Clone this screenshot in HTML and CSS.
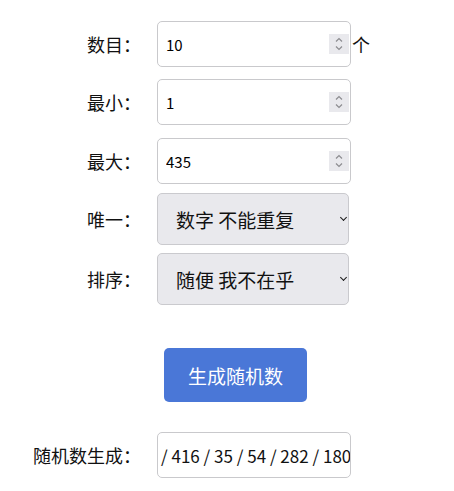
FILE: index.html
```html
<!DOCTYPE html>
<html lang="zh-CN">
<head>
<meta charset="utf-8">
<title>随机数生成</title>
<link rel="stylesheet" href="styles.css">
</head>
<body>
<main class="form">
  <div class="row row-count">
    <label class="lbl" for="count">数目：</label>
    <div class="num">
      <input id="count" class="field" type="text" value="10">
      <span class="spin" aria-hidden="true">
        <svg width="18" height="20" viewBox="0 0 18 20"><path d="M6 7.5 L9 4.5 L12 7.5" fill="none" stroke="#8c8c90" stroke-width="1.2"/><path d="M6 12.5 L9 15.5 L12 12.5" fill="none" stroke="#8c8c90" stroke-width="1.2"/></svg>
      </span>
    </div>
    <span class="unit">个</span>
  </div>
  <div class="row row-min">
    <label class="lbl" for="min">最小：</label>
    <div class="num">
      <input id="min" class="field" type="text" value="1">
      <span class="spin" aria-hidden="true">
        <svg width="18" height="20" viewBox="0 0 18 20"><path d="M6 7.5 L9 4.5 L12 7.5" fill="none" stroke="#8c8c90" stroke-width="1.2"/><path d="M6 12.5 L9 15.5 L12 12.5" fill="none" stroke="#8c8c90" stroke-width="1.2"/></svg>
      </span>
    </div>
  </div>
  <div class="row row-max">
    <label class="lbl" for="max">最大：</label>
    <div class="num">
      <input id="max" class="field" type="text" value="435">
      <span class="spin" aria-hidden="true">
        <svg width="18" height="20" viewBox="0 0 18 20"><path d="M6 7.5 L9 4.5 L12 7.5" fill="none" stroke="#8c8c90" stroke-width="1.2"/><path d="M6 12.5 L9 15.5 L12 12.5" fill="none" stroke="#8c8c90" stroke-width="1.2"/></svg>
      </span>
    </div>
  </div>
  <div class="row row-uniq">
    <label class="lbl" for="uniq">唯一：</label>
    <div class="sel">
      <select id="uniq" class="choice"><option>数字 不能重复</option><option>数字 可以重复</option></select>
    </div>
  </div>
  <div class="row row-sort">
    <label class="lbl" for="sort">排序：</label>
    <div class="sel">
      <select id="sort" class="choice"><option>随便 我不在乎</option><option>从小到大</option><option>从大到小</option></select>
    </div>
  </div>
  <div class="actions">
    <button class="gen" type="button">生成随机数</button>
  </div>
  <div class="row row-out">
    <label class="lbl">随机数生成：</label>
    <div class="result"><span class="result-text">/ 416 / 35 / 54 / 282 / 180</span></div>
  </div>
</main>
</body>
</html>
```

FILE: styles.css
```css
* { box-sizing: border-box; }

html, body {
  margin: 0;
  padding: 0;
  background: #ffffff;
}

body {
  font-family: "Noto Sans CJK SC", "Noto Sans", sans-serif;
  color: #111111;
}

.form {
  display: flex;
  flex-direction: column;
  padding-top: 21px;
}

.row {
  display: flex;
  align-items: center;
}

.row-min { margin-top: 12px; }
.row-max { margin-top: 13px; }
.row-uniq { margin-top: 9px; }
.row-sort { margin-top: 8px; }
.row-out { margin-top: 30px; }

.lbl {
  flex: none;
  width: 141px;
  text-align: right;
  font-size: 18px;
  line-height: 24px;
  margin-right: 16px;
  color: #111111;
}

.num {
  position: relative;
  width: 194px;
  height: 46px;
}

.field {
  display: block;
  width: 100%;
  height: 100%;
  border: 1px solid #c9c9cc;
  border-radius: 5px;
  background: #ffffff;
  padding: 0 30px 0 8px;
  font-family: "Noto Sans CJK SC", "Noto Sans", sans-serif;
  font-size: 15px;
  color: #000000;
  outline: none;
}

.spin {
  position: absolute;
  right: 2px;
  top: 13px;
  width: 20px;
  height: 20px;
  background: #e9e9ed;
  display: flex;
  align-items: center;
  justify-content: center;
}

.spin svg { display: block; }

.unit {
  font-size: 18px;
  line-height: 24px;
  margin-left: 1px;
}

.sel {
  position: relative;
  width: 192px;
  height: 52px;
}

.sel::after {
  content: "";
  position: absolute;
  right: 3px;
  top: 22px;
  width: 4px;
  height: 4px;
  border-right: 1.6px solid #1a1a1a;
  border-bottom: 1.6px solid #1a1a1a;
  transform: rotate(45deg);
  pointer-events: none;
}

.choice {
  appearance: none;
  -webkit-appearance: none;
  display: block;
  width: 100%;
  height: 100%;
  border: 1px solid #cacace;
  border-radius: 5px;
  background: #e9e9ed;
  padding: 0 14px 0 18px;
  font-family: "Noto Sans CJK SC", "Noto Sans", sans-serif;
  font-size: 19px;
  color: #111111;
  outline: none;
}

.actions {
  display: flex;
  margin-top: 43px;
  padding-left: 164px;
}

.gen {
  width: 143px;
  height: 54px;
  border: none;
  border-radius: 5px;
  background: #4a77d7;
  color: #ffffff;
  font-family: "Noto Sans CJK SC", "Noto Sans", sans-serif;
  font-size: 19px;
  padding: 0;
}

.result {
  width: 194px;
  height: 46px;
  border: 1px solid #c9c9cc;
  border-radius: 5px;
  background: #ffffff;
  display: flex;
  align-items: center;
  overflow: hidden;
  padding: 0 0 0 3px;
}

.result-text {
  flex: none;
  white-space: nowrap;
  font-size: 17px;
  color: #111111;
}
```
